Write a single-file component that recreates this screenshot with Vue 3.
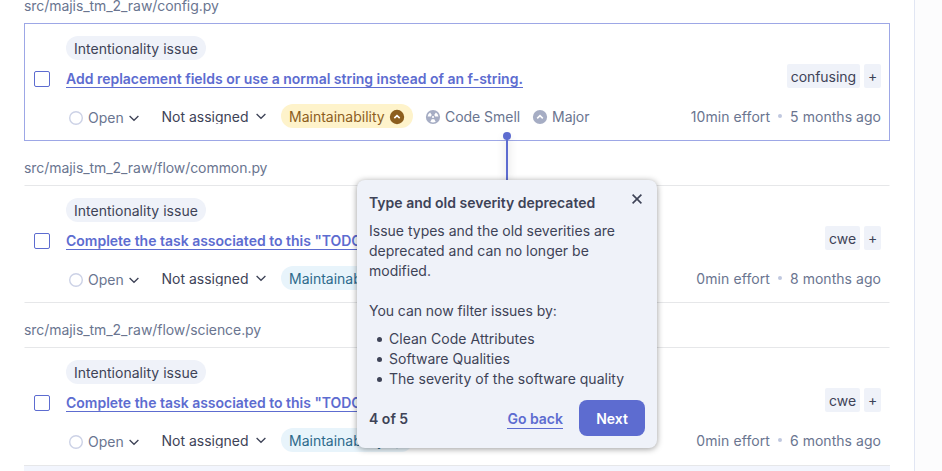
<script setup>
const groups = [
  {
    path: 'src/majis_tm_2_raw/config.py',
    title: 'Add replacement fields or use a normal string instead of an f-string.',
    tag: 'confusing', effort: '10min effort', age: '5 months ago', level: 'medium', selected: true,
  },
  {
    path: 'src/majis_tm_2_raw/flow/common.py',
    title: 'Complete the task associated to this "TODO" comment.',
    tag: 'cwe', effort: '0min effort', age: '8 months ago', level: 'low', selected: false,
  },
  {
    path: 'src/majis_tm_2_raw/flow/science.py',
    title: 'Complete the task associated to this "TODO" comment.',
    tag: 'cwe', effort: '0min effort', age: '6 months ago', level: 'low', selected: false,
  },
]
const filters = ['Clean Code Attributes', 'Software Qualities', 'The severity of the software quality']
</script>

<template>
  <div class="page">
    <main class="panel">
      <section v-for="g in groups" :key="g.path" class="group">
        <div class="path">{{ g.path }}</div>
        <article class="issue" :class="{ selected: g.selected }">
          <span class="checkbox"></span>
          <div class="content">
            <div class="head">
              <div class="heading">
                <span class="pill attribute">Intentionality issue</span>
                <a class="title">{{ g.title }}</a>
              </div>
              <div class="tags">
                <span class="tag">{{ g.tag }}</span>
                <span class="tag plus">+</span>
              </div>
            </div>
            <div class="meta">
              <span class="status">
                <svg class="ring" width="16" height="16" viewBox="0 0 16 16"><circle cx="8" cy="8" r="6.3" /></svg>
                <span class="status-text">Open</span>
                <svg class="chev" width="12" height="12" viewBox="0 0 12 12"><path d="M1.6 4 6 8.3 10.4 4" /></svg>
              </span>
              <span class="assignee">
                <span class="clip">Not assigned</span>
                <svg class="chev" width="12" height="12" viewBox="0 0 12 12"><path d="M1.6 4 6 8.3 10.4 4" /></svg>
              </span>
              <span class="pill quality" :class="g.level">
                Maintainability
                <svg width="16" height="16" viewBox="0 0 16 16">
                  <circle class="fill" cx="8" cy="8" r="7.2" />
                  <path class="arrow" d="M5.3 9.1 8 6.6l2.7 2.5" />
                </svg>
              </span>
              <template v-if="g.selected">
                <span class="legacy smell">
                  <svg width="16" height="16" viewBox="0 0 16 16">
                    <circle class="fill" cx="8" cy="8" r="7.1" />
                    <path class="blade" d="M6.8 6 5.1 3.4A5.5 5.5 0 0 0 2.6 7.5h3.3A2.2 2.2 0 0 1 6.8 6ZM9.2 6l1.7-2.6a5.5 5.5 0 0 1 2.5 4.1h-3.3A2.2 2.2 0 0 0 9.2 6ZM6.9 10l-1.6 2.7a5.5 5.5 0 0 0 5.4 0L9.1 10a2.2 2.2 0 0 1-2.2 0Z" />
                    <circle class="blade" cx="8" cy="8" r="1.1" />
                  </svg>
                  Code Smell
                </span>
                <span class="legacy">
                  <svg width="16" height="16" viewBox="0 0 16 16">
                    <circle class="fill" cx="8" cy="8" r="7.1" />
                    <path class="arrow" d="M5.2 9.3 8 6.7l2.8 2.6" />
                  </svg>
                  Major
                </span>
              </template>
              <span class="facts">
                <span class="effort">{{ g.effort }}</span><i class="dot"></i><span>{{ g.age }}</span>
              </span>
            </div>
          </div>
        </article>
      </section>
      <div class="next-row"></div>
    </main>

    <div class="stem"></div>
    <div class="knob"></div>
    <aside class="tour">
      <header class="tour-head">
        <strong>Type and old severity deprecated</strong>
        <svg class="close" width="16" height="16" viewBox="0 0 16 16"><path d="M3.6 3.6l8.8 8.8M12.4 3.6l-8.8 8.8" /></svg>
      </header>
      <p>Issue types and the old severities are deprecated and can no longer be modified.</p>
      <p class="second">You can now filter issues by:</p>
      <ul>
        <li v-for="f in filters" :key="f">{{ f }}</li>
      </ul>
      <footer>
        <strong class="count">4 of 5</strong>
        <a class="back">Go back</a>
        <button>Next</button>
      </footer>
    </aside>
  </div>
</template>

<style>
body { margin: 0; overflow: hidden; }
</style>

<style scoped>
* { box-sizing: border-box; }
.page {
  position: relative;
  height: 471px;
  overflow: hidden;
  background: #fcfcfd;
  font: 400 14px/20px Inter, "Liberation Sans", sans-serif;
  color: #3e4357;
}
.panel {
  width: 915px;
  height: 471px;
  padding: 0 24px;
  overflow: hidden;
  background: #fff;
  border-right: 1px solid #e1e6f3;
}
.group { margin-bottom: 17px; }
.group:first-child { margin-top: -4px; }
.group:nth-child(3) { margin-bottom: 0; }
.path { height: 27px; color: #6a7590; letter-spacing: -0.06px; }
.issue {
  display: flex;
  align-items: center;
  height: 118px;
  padding: 0 8px 0 9px;
  border: 1px solid transparent;
  border-top-color: #e6e7e9;
  border-bottom-color: #e6e7e9;
}
.issue.selected { border-color: #9da7e6; }
.group:nth-child(3) .issue { border-bottom-color: transparent; }
.checkbox {
  flex: none;
  width: 16px;
  height: 16px;
  margin-top: -6px;
  border: 1px solid #5d6cd0;
  border-radius: 2px;
}
.content { flex: 1; min-width: 0; margin-left: 16px; }
.head { display: flex; justify-content: space-between; align-items: flex-end; height: 52px; }
.heading { display: flex; flex-direction: column; align-items: flex-start; height: 52px; }
.pill {
  display: inline-flex;
  align-items: center;
  height: 24px;
  padding: 1px 8px 0;
  border-radius: 12px;
  background: #eff2f9;
  white-space: nowrap;
}
.attribute { width: 140px; letter-spacing: 0.02px; line-height: 22px; padding-top: 2px; }
.title {
  height: 19px;
  margin-top: 9px;
  line-height: 20px;
  font-weight: 600;
  letter-spacing: -0.01px;
  color: #5d6cd0;
  border-bottom: 1px solid #5d6cd0;
  white-space: nowrap;
}
.tags { display: flex; gap: 4px; }
.tag {
  height: 24px;
  padding: 0 4px;
  line-height: 25px;
  border-radius: 2px;
  background: #eff2f9;
  letter-spacing: -0.05px;
}
.tag.plus { width: 17px; line-height: 24px; }
.meta { display: flex; align-items: center; height: 24px; margin-top: 16px; line-height: 22px; white-space: nowrap; }
.status { display: flex; align-items: center; width: 96px; padding: 3px 0 0 2px; color: #6a7590; }
.ring { fill: none; stroke: #ccd2e6; stroke-width: 1.4; }
.status-text { margin: 0 4px; }
.chev { fill: none; stroke: #3e4357; stroke-width: 1.3; }
.assignee { display: flex; align-items: center; width: 119px; }
.assignee .chev { margin: 0 0 0 6px; }
.clip { height: 16px; margin: -1px 0 0 -0.5px; line-height: 18px; overflow: hidden; }
.quality { width: 132px; gap: 4px; margin-right: 12px; padding-top: 2px; }
.quality svg { margin-top: -1px; }
.medium { color: #8c5e1e; background: #fef3cb; }
.medium .fill { fill: #8c5e1e; }
.low { color: #2d6a8c; background: #e8f4fb; }
.low .fill { fill: #2d6a8c; }
.arrow { fill: none; stroke: #fff; stroke-width: 1.6; }
.legacy { display: flex; align-items: center; gap: 4px; padding-top: 2px; color: #6a7590; letter-spacing: -0.04px; }
.legacy svg { margin-top: -1px; }
.legacy .fill { fill: #a6adc4; }
.blade { fill: #fff; }
.smell { margin-right: 12px; }
.facts { display: flex; align-items: center; margin-left: auto; padding-top: 2px; color: #6a7590; letter-spacing: 0.04px; }
.effort { letter-spacing: 0.08px; }
.dot { width: 4px; height: 4px; margin: -3px 8px 0; border-radius: 50%; background: #c0c8df; }
.next-row { height: 20px; background: #f2f5fd; border-top: 1px solid #e6e7e9; }

.stem { position: absolute; left: 506px; top: 136px; width: 2px; height: 45px; background: #5d6cd0; box-shadow: 0 0 8px rgba(0, 0, 0, 0.25); }
.knob { position: absolute; left: 503px; top: 132px; width: 8px; height: 8px; border-radius: 50%; background: #5d6cd0; }
.tour {
  position: absolute;
  left: 357px;
  top: 180px;
  display: flex;
  flex-direction: column;
  width: 300px;
  height: 268px;
  padding: 13px 12px 12px;
  border-radius: 8px;
  background: #eff2f9;
  box-shadow: 0 1px 6px rgba(0, 0, 0, 0.4);
}
.tour strong { font-weight: 600; }
.tour-head { display: flex; justify-content: space-between; height: 28px; }
.close { margin-top: -2px; fill: none; stroke: #3e4357; stroke-width: 1.6; }
p { margin: 0; }
.second { margin-top: 20px; letter-spacing: -0.05px; }
ul { margin: 8px 0 0; padding: 0; list-style: none; }
li { display: flex; align-items: center; letter-spacing: 0.02px; }
li::before { content: ""; width: 5px; height: 5px; margin: 1px 7px 0 8px; border-radius: 50%; background: #3e4357; }
footer { display: flex; align-items: center; margin-top: auto; }
.count { padding-top: 2px; }
.back { height: 20px; margin: 2px 0 0 auto; padding-top: 1px; font-weight: 600; line-height: 18px; color: #5d6cd0; border-bottom: 1px solid #5d6cd0; }
button {
  width: 66px;
  height: 36px;
  margin-left: 16px;
  padding: 2px 0 0;
  border: 0;
  border-radius: 8px;
  font: 600 14px/20px Inter, "Liberation Sans", sans-serif;
  color: #fff;
  background: #5d6cd0;
}
</style>
